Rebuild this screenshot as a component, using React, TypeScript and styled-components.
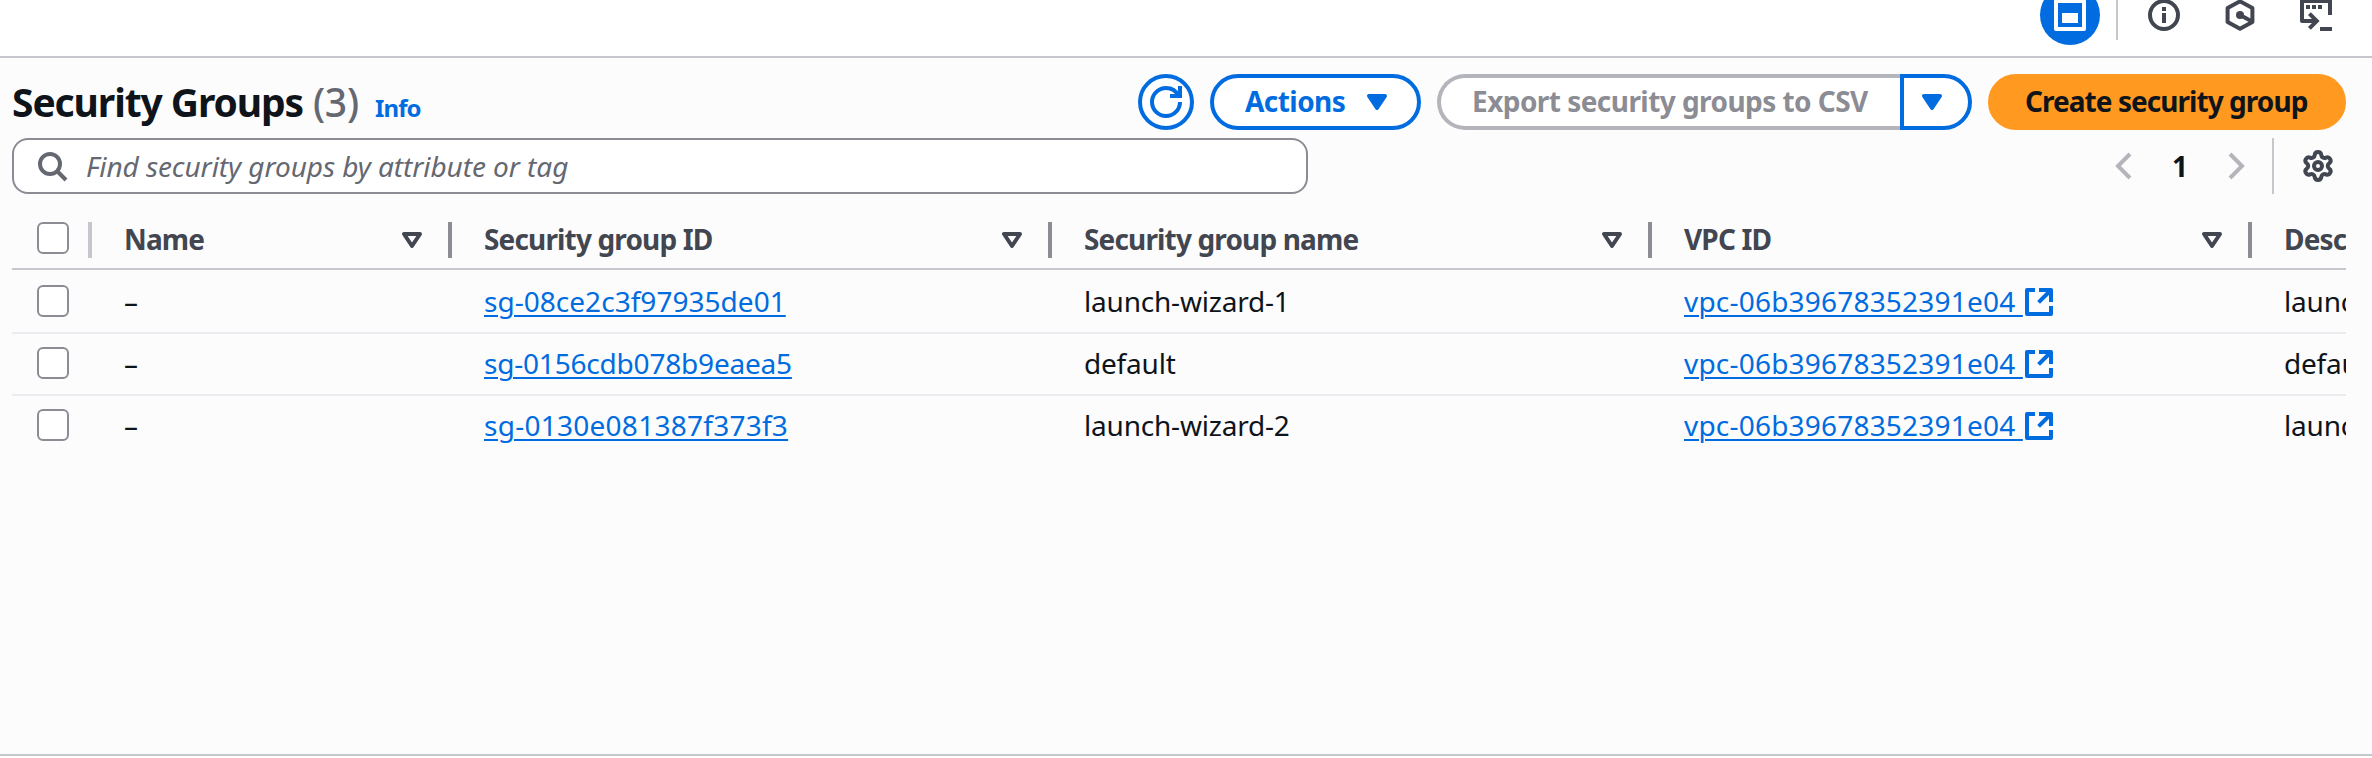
import React from "react";
import styled, { createGlobalStyle } from "styled-components";

const color = {
  text: "#0f141a",
  heading: "#424650",
  muted: "#656871",
  border: "#8c8c94",
  divider: "#c6c6cd",
  rowLine: "#ebebf0",
  disabled: "#b4b4bb",
  blue: "#006ce0",
  orange: "#ff9920",
};

const Global = createGlobalStyle`
  *, *::before, *::after { box-sizing: border-box; }
  html, body { margin: 0; padding: 0; }
  body {
    background: #fff;
    color: ${color.text};
    font-family: "Noto Sans", "Open Sans", sans-serif;
    font-size: 28px;
    line-height: 40px;
    overflow: hidden;
  }
  button { font: inherit; margin: 0; }
`;

const Page = styled.div`
  display: flex;
  flex-direction: column;
  height: 758px;
  overflow: hidden;
`;

const TopBar = styled.header`
  height: 58px;
  flex: none;
  background: #fff;
  border-bottom: 2px solid ${color.divider};
  overflow: hidden;
`;

const TopTools = styled.div`
  display: flex;
  align-items: center;
  justify-content: flex-end;
  height: 60px;
  margin-top: -15px;
  padding-right: 40px;
  color: ${color.heading};
`;

const ActiveTool = styled.span`
  display: grid;
  place-items: center;
  width: 60px;
  height: 60px;
  border-radius: 50%;
  background: ${color.blue};
  color: #fff;
`;

const ToolDivider = styled.span`
  width: 2px;
  height: 50px;
  margin: 0 30px 0 16px;
  background: ${color.divider};
`;

const ToolList = styled.div`
  display: flex;
  gap: 44px;
`;

const Main = styled.main`
  height: 698px;
  flex: none;
  padding: 16px 26px 0 12px;
  background: #fcfcfd;
  border-bottom: 2px solid ${color.divider};
`;

const TitleRow = styled.div`
  display: flex;
  align-items: center;
  justify-content: space-between;
  height: 56px;
`;

const TitleGroup = styled.div`
  display: flex;
  align-items: baseline;
`;

const Title = styled.h1`
  margin: 0;
  width: 301px;
  font-size: 39px;
  font-weight: 700;
  letter-spacing: -1.1px;
  white-space: nowrap;
`;

const Count = styled.span`
  width: 62px;
  font-size: 39px;
  font-weight: 500;
  letter-spacing: -0.3px;
  color: ${color.muted};
`;

const InfoLink = styled.a`
  font-size: 24px;
  font-weight: 700;
  line-height: 24px;
  letter-spacing: -0.9px;
  color: ${color.blue};
`;

const Actions = styled.div`
  display: flex;
  gap: 16px;
`;

const Button = styled.button<{ $width: number; $variant?: "primary" | "disabled" }>`
  display: flex;
  align-items: center;
  justify-content: space-between;
  width: ${(p) => p.$width}px;
  height: 56px;
  padding: 0 24px 2px ${(p) => (p.$variant === "primary" ? 33 : 31)}px;
  border: 4px solid ${(p) => (p.$variant === "primary" ? color.orange : p.$variant === "disabled" ? color.disabled : color.blue)};
  border-radius: 28px;
  background: ${(p) => (p.$variant === "primary" ? color.orange : "#fff")};
  color: ${(p) => (p.$variant === "primary" ? color.text : p.$variant === "disabled" ? color.border : color.blue)};
  font-weight: 700;
  letter-spacing: ${(p) => (p.$variant === "primary" ? -0.95 : -0.55)}px;
  white-space: nowrap;

  svg { margin-top: -2px; }
`;

const RoundButton = styled(Button)`
  justify-content: center;
  padding: 0;
  svg { margin-top: 0; }
`;

const SplitButton = styled.div`
  display: flex;
`;

const SplitMain = styled(Button)`
  border-right: 0;
  border-radius: 28px 0 0 28px;
`;

const SplitToggle = styled(Button)`
  padding: 0 0 2px 12px;
  border-radius: 0 28px 28px 0;
`;

const FilterRow = styled.div`
  display: flex;
  align-items: center;
  justify-content: space-between;
  height: 56px;
  margin-top: 8px;
  padding-right: 12px;
`;

const Search = styled.label`
  display: flex;
  align-items: center;
  width: 1296px;
  height: 56px;
  padding-left: 22px;
  border: 2px solid ${color.border};
  border-radius: 16px;
  background: #fff;
  color: ${color.muted};
  font-style: italic;
  letter-spacing: -0.07px;
`;

const Placeholder = styled.span`
  margin-left: 18px;
`;

const Pager = styled.div`
  display: flex;
  align-items: center;
  color: ${color.disabled};
`;

const PageNumber = styled.span`
  width: 80px;
  text-align: center;
  font-weight: 700;
  color: ${color.text};
`;

const PagerDivider = styled.span`
  width: 2px;
  height: 56px;
  margin: 0 28px 0 20px;
  background: ${color.divider};
`;

const Settings = styled.span`
  display: flex;
  color: ${color.heading};
`;

const Table = styled.div`
  margin-top: 18px;
  overflow: hidden;
`;

const Row = styled.div`
  display: grid;
  grid-template-columns: 80px 360px 600px 600px 600px 94px;
  height: 62px;
  border-bottom: 2px solid ${color.rowLine};

  &:last-child { border-bottom-color: transparent; }
`;

const HeadRow = styled(Row)`
  height: 58px;
  border-bottom-color: ${color.divider};
`;

const Body = styled.div`
  padding-top: 2px;
`;

const HeadCell = styled.div<{ $light?: boolean }>`
  display: flex;
  align-items: center;
  justify-content: space-between;
  height: 36px;
  margin-top: 10px;
  padding: 0 20px 0 32px;
  border-right: 4px solid ${(p) => (p.$light ? color.divider : color.border)};
  color: ${color.heading};
  font-weight: 700;
  letter-spacing: -0.85px;
  white-space: nowrap;

  svg { margin-top: -4px; }

  &:last-child { border-right: 0; padding-right: 0; overflow: hidden; }
`;

const HeadLabel = styled.span`
  margin-top: -2px;
`;

const SelectHead = styled(HeadCell)`
  align-items: flex-start;
  padding: 0 0 0 25px;
`;

const SelectCell = styled.div`
  padding: 13px 0 0 25px;
`;

const Checkbox = styled.span`
  display: block;
  width: 32px;
  height: 32px;
  border: 2px solid ${color.border};
  border-radius: 6px;
  background: #fff;
`;

const Cell = styled.div`
  padding: 9px 0 0 32px;
  letter-spacing: -0.2px;
  white-space: nowrap;
  overflow: hidden;
`;

const Link = styled.a<{ $tracking: number }>`
  color: ${color.blue};
  letter-spacing: ${(p) => p.$tracking}px;
  text-decoration: underline;
  text-decoration-thickness: 2px;
  text-underline-offset: 3px;
  white-space: pre;
`;

const LinkIcon = styled.span`
  display: inline-block;
  height: 32px;
  vertical-align: -6px;
  color: ${color.blue};
  line-height: 0;
`;

const Svg = styled.svg`
  display: block;
  flex: none;
  width: 32px;
  height: 32px;
  fill: none;
  stroke: currentColor;
  stroke-width: 2;
`;

type IconProps = { children: React.ReactNode; viewBox?: string };
const Icon = ({ children, viewBox = "0 0 16 16" }: IconProps) => <Svg viewBox={viewBox}>{children}</Svg>;

const WindowIcon = () => (
  <Icon>
    <path d="M1 1h14v14H1z" strokeLinejoin="round" />
    <path d="M4 7h8v5H4z" fill="currentColor" stroke="none" />
  </Icon>
);
const InfoIcon = () => (
  <Icon>
    <circle cx="8" cy="8" r="7" />
    <path d="M8 4v2M8 7v5" />
  </Icon>
);
const HexagonIcon = () => (
  <Icon>
    <path d="M8 1.15l6.2 3.4v6.9L8 14.85l-6.2-3.4v-6.9z" strokeLinejoin="round" />
    <circle cx="8" cy="8" r="2" fill="currentColor" stroke="none" />
    <path d="M8 8l5.8 3.1" />
  </Icon>
);
const ShellIcon = () => (
  <Icon>
    <path d="M15 8V1H1v10h7.5" strokeLinejoin="round" />
    <path d="M4.7 7.3L8.4 11l-3.7 3.7M3 4h2M6 4h2M9 4h2M10 15h6" />
  </Icon>
);
const RefreshIcon = () => (
  <Icon>
    <path d="M15 8c0 3.87-3.13 7-7 7s-7-3.13-7-7 3.13-7 7-7c2.79 0 5.2 1.63 6.33 4" />
    <path d="M10 5h5V0" />
  </Icon>
);
const Caret = ({ filled }: { filled?: boolean }) => (
  <Icon>
    <path d="M4 6h8l-4 6z" fill={filled ? "currentColor" : "none"} strokeLinejoin="round" />
  </Icon>
);
const SearchIcon = () => (
  <Icon>
    <circle cx="7" cy="7" r="5" />
    <path d="M10.5 10.5L15 15" />
  </Icon>
);
const GearIcon = () => (
  <Icon viewBox="0.57 0.57 22.86 22.86">
    <g strokeWidth="2.86" strokeLinejoin="round">
      <path d="M9.671 4.136a2.34 2.34 0 0 1 4.659 0 2.34 2.34 0 0 0 3.319 1.915 2.34 2.34 0 0 1 2.33 4.033 2.34 2.34 0 0 0 0 3.831 2.34 2.34 0 0 1-2.33 4.033 2.34 2.34 0 0 0-3.319 1.915 2.34 2.34 0 0 1-4.659 0 2.34 2.34 0 0 0-3.32-1.915 2.34 2.34 0 0 1-2.33-4.033 2.34 2.34 0 0 0 0-3.831A2.34 2.34 0 0 1 6.35 6.051a2.34 2.34 0 0 0 3.319-1.915" />
      <circle cx="12" cy="12" r="2.86" />
    </g>
  </Icon>
);
const ExternalIcon = () => (
  <Icon>
    <path d="M6 2H2v12h12v-4M8 2h6v6" strokeLinejoin="round" />
    <path d="M14 2L7.8 8.2" />
  </Icon>
);

const columns = ["Name", "Security group ID", "Security group name", "VPC ID"];

const groups = [
  { id: "sg-08ce2c3f97935de01", tracking: 0.03, name: "launch-wizard-1", description: "launch-wizard-1 created" },
  { id: "sg-0156cdb078b9eaea5", tracking: -0.2, name: "default", description: "default VPC security group" },
  { id: "sg-0130e081387f373f3", tracking: 0.26, name: "launch-wizard-2", description: "launch-wizard-2 created" },
];
const vpcId = "vpc-06b39678352391e04";

export default function App() {
  return (
    <Page>
      <Global />
      <TopBar>
        <TopTools>
          <ActiveTool><WindowIcon /></ActiveTool>
          <ToolDivider />
          <ToolList>
            <InfoIcon />
            <HexagonIcon />
            <ShellIcon />
          </ToolList>
        </TopTools>
      </TopBar>
      <Main>
        <TitleRow>
          <TitleGroup>
            <Title>Security Groups</Title>
            <Count>(3)</Count>
            <InfoLink>Info</InfoLink>
          </TitleGroup>
          <Actions>
            <RoundButton $width={56} aria-label="Refresh"><RefreshIcon /></RoundButton>
            <Button $width={211}>Actions<Caret filled /></Button>
            <SplitButton>
              <SplitMain $width={463} $variant="disabled">Export security groups to CSV</SplitMain>
              <SplitToggle $width={72} aria-label="Export options"><Caret filled /></SplitToggle>
            </SplitButton>
            <Button $width={358} $variant="primary">Create security group</Button>
          </Actions>
        </TitleRow>
        <FilterRow>
          <Search>
            <SearchIcon />
            <Placeholder>Find security groups by attribute or tag</Placeholder>
          </Search>
          <Pager>
            <Icon><path d="M11 2L5 8l6 6" /></Icon>
            <PageNumber>1</PageNumber>
            <Icon><path d="M5 2l6 6-6 6" /></Icon>
            <PagerDivider />
            <Settings><GearIcon /></Settings>
          </Pager>
        </FilterRow>
        <Table>
          <HeadRow>
            <SelectHead $light><Checkbox /></SelectHead>
            {columns.map((label) => (
              <HeadCell key={label}>
                <HeadLabel>{label}</HeadLabel>
                <Caret />
              </HeadCell>
            ))}
            <HeadCell><HeadLabel>Description</HeadLabel></HeadCell>
          </HeadRow>
          <Body>
            {groups.map((group) => (
              <Row key={group.id}>
                <SelectCell><Checkbox /></SelectCell>
                <Cell>–</Cell>
                <Cell><Link $tracking={group.tracking}>{group.id}</Link></Cell>
                <Cell>{group.name}</Cell>
                <Cell>
                  <Link $tracking={0.2}>{vpcId + " "}</Link>
                  <LinkIcon><ExternalIcon /></LinkIcon>
                </Cell>
                <Cell>{group.description}</Cell>
              </Row>
            ))}
          </Body>
        </Table>
      </Main>
    </Page>
  );
}
